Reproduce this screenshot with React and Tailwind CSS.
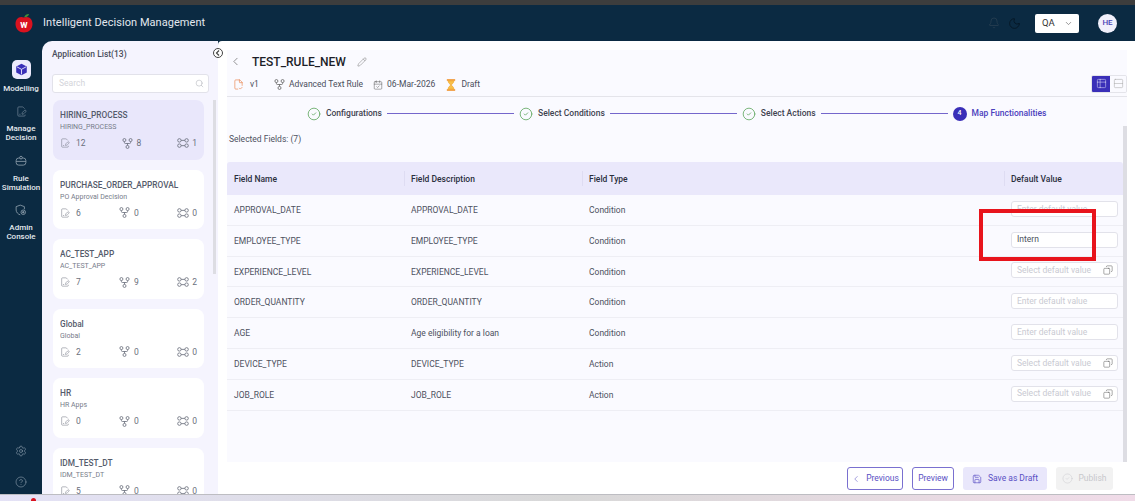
import React from 'react';
import {
  Bell, ChevronDown, ChevronLeft, CalendarCheck, CircleCheck, CircleHelp, Moon, Pencil, Save, Search, Settings,
  FilePenLine, Copy, Table2, Rows2, FileCheck2,
} from 'lucide-react';

const apps = [
  { name: 'HIRING_PROCESS', desc: 'HIRING_PROCESS', a: 12, b: 8, c: 1, active: true },
  { name: 'PURCHASE_ORDER_APPROVAL', desc: 'PO Approval Decision', a: 6, b: 0, c: 0 },
  { name: 'AC_TEST_APP', desc: 'AC_TEST_APP', a: 7, b: 9, c: 2 },
  { name: 'Global', desc: 'Global', a: 2, b: 0, c: 0 },
  { name: 'HR', desc: 'HR Apps', a: 0, b: 0, c: 0 },
  { name: 'IDM_TEST_DT', desc: 'IDM_TEST_DT', a: 5, b: 0, c: 0 },
];

const fields = [
  { name: 'APPROVAL_DATE', desc: 'APPROVAL_DATE', type: 'Condition', placeholder: 'Enter default value' },
  { name: 'EMPLOYEE_TYPE', desc: 'EMPLOYEE_TYPE', type: 'Condition', value: 'Intern' },
  { name: 'EXPERIENCE_LEVEL', desc: 'EXPERIENCE_LEVEL', type: 'Condition', placeholder: 'Select default value', picker: true },
  { name: 'ORDER_QUANTITY', desc: 'ORDER_QUANTITY', type: 'Condition', placeholder: 'Enter default value' },
  { name: 'AGE', desc: 'Age eligibility for a loan', type: 'Condition', placeholder: 'Enter default value' },
  { name: 'DEVICE_TYPE', desc: 'DEVICE_TYPE', type: 'Action', placeholder: 'Select default value', picker: true },
  { name: 'JOB_ROLE', desc: 'JOB_ROLE', type: 'Action', placeholder: 'Select default value', picker: true },
];

const steps = ['Configurations', 'Select Conditions', 'Select Actions'];

const BranchIcon = ({ className }) => (
  <svg viewBox="0 0 16 16" fill="none" stroke="currentColor" strokeWidth="1.2" className={className}>
    <circle cx="3.500" cy="3" r="2.200" />
    <circle cx="12.500" cy="3" r="2.200" />
    <circle cx="8" cy="13" r="2.200" />
    <path d="M3.500 5.200V6.500Q3.500 8 5 8H11Q12.500 8 12.500 6.500V5.200M8 8V10.800" />
  </svg>
);

const NodesIcon = ({ className }) => (
  <svg viewBox="0 0 16 16" fill="none" stroke="currentColor" strokeWidth="1.100" className={className}>
    <circle cx="3.200" cy="4.500" r="2.300" />
    <circle cx="12.800" cy="4.500" r="2.300" />
    <circle cx="3.200" cy="11.500" r="2.300" />
    <circle cx="12.800" cy="11.500" r="2.300" />
    <path d="M5.500 4.500h5M5.500 11.500h5" />
  </svg>
);

const CubeIcon = () => (
  <svg viewBox="0 0 16 16" className="h-[13px] w-[13px]">
    <path d="M8 .8 14.500 4.300V11.700L8 15.200 1.500 11.700V4.300Z" fill="#3a2fb8" />
    <path d="M2.500 4.800 8 7.800 13.500 4.800M8 7.800V14" fill="none" stroke="#eceafd" strokeWidth="1.100" />
  </svg>
);

const SimIcon = () => (
  <svg viewBox="0 0 16 16" fill="none" stroke="#8fa0ae" strokeWidth="1.100" className="h-[12px] w-[12px]">
    <rect x="1.500" y="4" width="13" height="9.500" rx="3.500" />
    <path d="M1.500 8.500h13" />
    <circle cx="8" cy="3.500" r="1.800" fill="#0b2a42" />
  </svg>
);

const AdminIcon = () => (
  <svg viewBox="0 0 16 16" fill="none" stroke="#8fa0ae" strokeWidth="1.100" className="h-[12px] w-[12px]">
    <path d="M7 1.500 12.500 3.500V7M7 1.500 1.500 3.500V8C1.500 11 4 13.500 7 14.500" />
    <circle cx="11" cy="11" r="3" />
    <circle cx="11" cy="11" r="1" fill="#8fa0ae" />
  </svg>
);

const HourglassIcon = () => (
  <svg viewBox="0 0 12 14" className="h-[12px] w-[10px]">
    <path d="M1 1h10M1 13h10" stroke="#f08a1c" strokeWidth="1.600" />
    <path d="M2.500 2H9.500C9.500 4.500 7.500 6 6 7 4.500 6 2.500 4.500 2.500 2ZM6 7C7.500 8 9.500 9.500 9.500 12H2.500C2.500 9.500 4.500 8 6 7Z" fill="#f8c04a" stroke="#f0a020" strokeWidth="0.700" />
  </svg>
);

const Logo = () => (
  <svg viewBox="0 0 20 20" className="h-[20px] w-[20px]">
    <path d="M10 4.500C11 1.800 13 .8 15 1 14.500 3.200 12.500 4.500 10 4.500Z" fill="#3f8f3a" />
    <path d="M10 4.500C5 2.500 1.500 6 1.500 11c0 5 4 8.500 8.500 8.500S18.500 16 18.500 11c0-5-3.500-8.500-8.500-6.500Z" fill="#d9121f" />
    <text x="10" y="14.500" textAnchor="middle" fontSize="10" fontWeight="700" fill="#fff" fontFamily="Roboto, sans-serif">w</text>
  </svg>
);

const NavItem = ({ icon, label, active }) => (
  <div className="flex flex-col items-center text-center">
    {active ? (
      <div className="mb-[5px] flex h-[19px] w-[19px] items-center justify-center rounded-[5px] bg-[#eceafd]">
        {icon}
      </div>
    ) : (
      <div className="mb-[3px] flex h-[19px] items-center justify-center">{icon}</div>
    )}
    <span className="text-[8px] leading-[9.500px] font-medium text-[#e4e9ee]">{label}</span>
  </div>
);

const AppCard = ({ app }) => (
  <div className={`h-[59.500px] shrink-0 rounded-[8px] px-[7px] pt-[10px] ${app.active ? 'bg-[#e9e7fb]' : 'bg-white'}`}>
    <div className="truncate text-[8.300px] leading-[10px] font-medium text-[#555b6b]">{app.name}</div>
    <div className="mt-[2px] truncate text-[7px] leading-[10px] text-[#777c8a]">{app.desc}</div>
    <div className="mt-[5px] flex items-center justify-between text-[8.500px] text-[#6a6f7c]">
      <span className="flex items-center gap-[6px]"><FilePenLine className="h-[10px] w-[10px]" strokeWidth={1.2} />{app.a}</span>
      <span className="flex items-center gap-[4px]"><BranchIcon className="h-[11px] w-[11px]" />{app.b}</span>
      <span className="flex items-center gap-[3px]"><NodesIcon className="h-[12px] w-[12px]" />{app.c}</span>
    </div>
  </div>
);

const Step = ({ label }) => (
  <>
    <CircleCheck className="h-[14px] w-[14px] shrink-0 text-[#5fa75f]" strokeWidth={1.4} />
    <span className="mx-[5px] shrink-0 text-[8.500px] font-medium text-[#3f4350]">{label}</span>
    <span className="h-px w-[127px] shrink-0 bg-[#7466cc]" />
    <span className="w-[5px] shrink-0" />
  </>
);

const HeaderCell = ({ children, className }) => (
  <div className={`flex h-[15px] items-center border-r border-[#dedcf2] pt-[1px] text-[8.500px] font-medium text-[#2b2f3d] ${className}`}>
    {children}
  </div>
);

const FieldRow = ({ field }) => (
  <div className="grid h-[30.800px] grid-cols-[178px_178px_422px_1fr] items-center border-b border-[#eeeef4] text-[8.500px] text-[#4d5160]">
    <div className="pl-[7px] pt-[1px]">{field.name}</div>
    <div className="pl-[6px] pt-[1px]">{field.desc}</div>
    <div className="pl-[6px] pt-[1px]">{field.type}</div>
    <div className="pb-[2px] pl-[6px]">
      <div className="flex h-[16px] w-[107px] items-center justify-between rounded-[3px] border border-[#e2e2ea] bg-white pl-[5px] pr-[4px]">
        {field.value
          ? <span className="text-[8.500px] text-[#4d5160]">{field.value}</span>
          : <span className="text-[8.500px] text-[#c9cad2]">{field.placeholder}</span>}
        {field.picker && <Copy className="h-[10px] w-[10px] -scale-x-100 text-[#555]" strokeWidth={1.2} />}
      </div>
    </div>
  </div>
);

export default function App() {
  return (
    <div className="relative flex h-[501px] w-[1135px] flex-col overflow-hidden bg-[#0b2a42] font-['Roboto',sans-serif]">
      <div className="h-[5px] shrink-0 bg-[#3d3d3d]" />

      {/* top bar */}
      <header className="flex h-[36px] shrink-0 items-center pl-[14px] pr-[18px]">
        <Logo />
        <span className="ml-[9px] text-[11px] tracking-[0.05px] text-[#e3e8ee]">Intelligent Decision Management</span>
        <div className="ml-auto flex items-center">
          <Bell className="h-[12px] w-[12px] text-[#2c4253]" strokeWidth={1.4} />
          <Moon className="ml-[8px] h-[13px] w-[13px] text-[#04131f]" strokeWidth={1.4} />
          <div className="ml-[14px] flex h-[19px] w-[44px] items-center justify-between rounded-[2px] bg-white pl-[7px] pr-[6px] text-[9.500px] text-[#333]">
            QA <ChevronDown className="h-[9px] w-[9px] text-[#777]" />
          </div>
          <div className="ml-[19px] flex h-[19px] w-[19px] items-center justify-center rounded-full bg-[#f1f0fb] text-[8px] font-medium text-[#4a42b5]">HE</div>
        </div>
      </header>

      <div className="flex min-h-0 flex-1">
        {/* side nav */}
        <nav className="flex w-[42px] shrink-0 flex-col items-center pb-[6px] pt-[19px]">
          <NavItem label="Modelling" active icon={<CubeIcon />} />
          <div className="mt-[8px]" />
          <NavItem label={<>Manage<br />Decision</>} icon={<FilePenLine className="h-[11px] w-[11px] text-[#8fa0ae]" strokeWidth={1.2} />} />
          <div className="mt-[9px]" />
          <NavItem label={<>Rule<br />Simulation</>} icon={<SimIcon />} />
          <div className="mt-[8px]" />
          <NavItem label={<>Admin<br />Console</>} icon={<AdminIcon />} />
          <Settings className="mt-auto h-[12px] w-[12px] text-[#8fa0ae]" strokeWidth={1.2} />
          <CircleHelp className="mt-[19px] h-[12px] w-[12px] text-[#8fa0ae]" strokeWidth={1.2} />
        </nav>

        {/* application list */}
        <aside className="flex w-[176px] shrink-0 flex-col overflow-hidden rounded-tl-[10px] bg-[#f5f4fe] pl-[10px] pr-[3px]">
          <div className="pt-[8px] text-[8.500px] leading-[10px] font-medium text-[#4a4e5c]">Application List(13)</div>
          <div className="mt-[15px] mr-[6px] flex h-[19px] shrink-0 items-center justify-between rounded-[3px] border border-[#e2e2ea] bg-white pl-[6px] pr-[4px]">
            <span className="text-[8.500px] text-[#d3d4da]">Search</span>
            <Search className="h-[9px] w-[9px] text-[#a8aab3]" strokeWidth={1.3} />
          </div>
          <div className="mt-[7px] ml-[1px] flex min-h-0 flex-1 gap-[9px]">
            <div className="flex w-[151px] shrink-0 flex-col gap-[10px] overflow-hidden">
              {apps.map((app) => <AppCard key={app.name} app={app} />)}
            </div>
            <div className="h-[174px] w-[3px] shrink-0 bg-[#dddde3]" />
          </div>
        </aside>

        {/* main */}
        <main className="flex min-w-0 flex-1 flex-col rounded-tl-[4px] bg-white pl-[9px] pr-[8px] pt-[9px]">
          <div className="flex min-h-0 flex-1 flex-col bg-[#fafaff]">
            <div className="flex h-[23px] shrink-0 items-center pl-[2px]">
              <ChevronLeft className="h-[13px] w-[13px] text-[#666]" strokeWidth={1.3} />
              <span className="ml-[10px] text-[12px] font-medium text-[#1c1e28]">TEST_RULE_NEW</span>
              <Pencil className="ml-[11px] h-[10px] w-[10px] text-[#777]" strokeWidth={1.2} />
            </div>
            <div className="flex h-[24px] shrink-0 items-center justify-between border-b border-[#e4e4ea] pl-[6px]">
              <div className="flex items-center text-[8.500px] text-[#4a4e5c]">
                <FileCheck2 className="h-[11px] w-[11px] text-[#e8763a]" strokeWidth={1.3} />
                <span className="ml-[6px]">v1</span>
                <BranchIcon className="ml-[15px] h-[11px] w-[11px] text-[#666]" />
                <span className="ml-[4px]">Advanced Text Rule</span>
                <CalendarCheck className="ml-[10px] h-[10px] w-[10px] text-[#555]" strokeWidth={1.2} />
                <span className="ml-[4px]">06-Mar-2026</span>
                <span className="ml-[11px]"><HourglassIcon /></span>
                <span className="ml-[5px]">Draft</span>
              </div>
              <div className="mb-[2px] flex h-[18px] overflow-hidden rounded-[2px] border border-[#e4e4ea]">
                <div className="flex w-[18px] items-center justify-center bg-[#3a2fb8]"><Table2 className="h-[11px] w-[11px] text-[#d8d6f5]" strokeWidth={1.2} /></div>
                <div className="flex w-[16px] items-center justify-center bg-[#fafaff]"><Rows2 className="h-[11px] w-[11px] text-[#aaa]" strokeWidth={1.2} /></div>
              </div>
            </div>
            <div className="flex h-[30px] shrink-0 items-center pl-[80px] pt-[3px]">
              {steps.map((s) => <Step key={s} label={s} />)}
              <span className="flex h-[14px] w-[14px] items-center justify-center rounded-full bg-[#3a2fb8] text-[7px] font-medium text-white">4</span>
              <span className="ml-[5px] text-[8.500px] font-medium text-[#4a40bd]">Map Functionalities</span>
            </div>
            <div className="flex min-h-0 flex-1">
              <div className="flex min-w-0 flex-1 flex-col">
                <div className="h-[35px] shrink-0 pl-[2px] pt-[5px] text-[8.500px] leading-[15px] text-[#4d5160]">Selected Fields: (7)</div>
                <div className="grid h-[33px] shrink-0 grid-cols-[178px_178px_422px_1fr] items-center rounded-t-[3px] bg-[#eae8fb]">
                  <HeaderCell className="pl-[7px]">Field Name</HeaderCell>
                  <HeaderCell className="pl-[6px]">Field Description</HeaderCell>
                  <HeaderCell className="pl-[6px]">Field Type</HeaderCell>
                  <HeaderCell className="border-r-0 pl-[6px]">Default Value</HeaderCell>
                </div>
                {fields.map((f) => <FieldRow key={f.name} field={f} />)}
              </div>
              <div className="mt-[-1px] w-[4px] shrink-0 bg-[#dddde3]" />
            </div>
            <div className="flex h-[32px] shrink-0 items-center justify-end gap-[9px] bg-white pr-[14px] pt-[1px] text-[8.500px]">
              <button className="flex h-[23px] w-[56px] items-center justify-center gap-[5px] rounded-[3px] border border-[#7a70d0] text-[#5a50c4]">
                <ChevronLeft className="h-[10px] w-[10px]" strokeWidth={1.3} />Previous
              </button>
              <button className="flex h-[23px] w-[42px] items-center justify-center rounded-[3px] border border-[#7a70d0] text-[#5a50c4]">Preview</button>
              <button className="flex h-[23px] w-[84px] items-center justify-center gap-[6px] rounded-[3px] bg-[#e9e7fb] text-[#5a50c4]">
                <Save className="h-[10px] w-[10px]" strokeWidth={1.6} />Save as Draft
              </button>
              <button className="flex h-[23px] w-[57px] items-center justify-center gap-[5px] rounded-[3px] bg-[#f2f2f2] text-[#c8c8cc]">
                <CircleCheck className="h-[11px] w-[11px]" strokeWidth={1} />Publish
              </button>
            </div>
          </div>
        </main>
      </div>

      <div className="relative h-[7px] shrink-0 border-t border-[#bdbdc2] bg-gradient-to-r from-[#e4e2f6] via-[#d8d8d8] to-[#f0dbe8]">
        <span className="absolute left-[31px] top-[3px] h-[4px] w-[5px] rounded-t-full bg-[#d9121f]" />
      </div>

      {/* collapse toggle over the panel edge */}
      <div className="absolute left-[213px] top-[48px] flex h-[10px] w-[10px] items-center justify-center rounded-full border border-[#444] bg-white">
        <svg viewBox="0 0 8 8" className="h-[8px] w-[8px]" fill="none" stroke="#444" strokeWidth="1.200">
          <path d="M5 1.500 2.500 4 5 6.500" />
        </svg>
      </div>
      {/* red annotation from the screenshot */}
      <div className="absolute left-[979px] top-[209px] h-[52px] w-[117px] border-[4px] border-[#e8141c]" />
    </div>
  );
}
